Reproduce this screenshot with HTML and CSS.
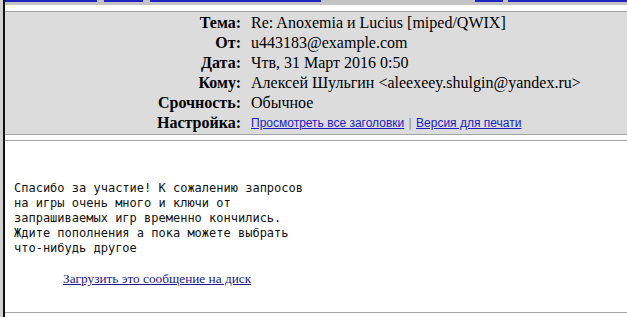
FILE: index.html
```html
<!DOCTYPE html>
<html lang="ru">
<head>
    <meta charset="UTF-8">
    <title>Re: Anoxemia и Lucius [miped/QWIX]</title>
    <link rel="stylesheet" href="styles.css">
</head>
<body>
    <div class="page">
        <div class="frame">
            <div class="toolbar">
                <span class="tab tab-inbox"></span>
                <span class="tab tab-prev"></span>
                <span class="tab tab-list"></span>
                <span class="tab-space"></span>
                <span class="tab tab-next"></span>
                <span class="tab tab-last"></span>
            </div>

            <div class="headers">
                <div class="label">Тема:</div>
                <div class="value">Re: Anoxemia и Lucius [miped/QWIX]</div>
                <div class="label">От:</div>
                <div class="value">u443183@example.com</div>
                <div class="label">Дата:</div>
                <div class="value">Чтв, 31 Март 2016 0:50</div>
                <div class="label">Кому:</div>
                <div class="value">Алексей Шульгин &lt;aleexeey.shulgin@yandex.ru&gt;</div>
                <div class="label">Срочность:</div>
                <div class="value">Обычное</div>
                <div class="label">Настройка:</div>
                <div class="value options">
                    <a href="#">Просмотреть все заголовки</a>
                    <span class="sep">|</span>
                    <a href="#">Версия для печати</a>
                </div>
            </div>

            <div class="message">
<pre class="text">Спасибо за участие! К сожалению запросов
на игры очень много и ключи от
запрашиваемых игр временно кончились.
Ждите пополнения а пока можете выбрать
что-нибудь другое</pre>
                <a href="#" class="download">Загрузить это сообщение на диск</a>
            </div>
        </div>
    </div>
</body>
</html>
```

FILE: styles.css
```css
body {
    margin: 0;
    padding: 0;
    background-color: #fff;
    font-family: 'Liberation Serif', 'Times New Roman', serif;
    font-size: 16px;
    color: #000;
}

.page {
    border-left: 3px solid #d2d2d2;
    min-height: 317px;
}

.frame {
    border-left: 2px solid #111;
    min-height: 317px;
}

.toolbar {
    display: flex;
    height: 5px;
    background-color: #c4c4c4;
    margin-bottom: 6px;
}

.tab {
    height: 2px;
    background-color: #2323c4;
}

.tab-inbox { width: 92px; margin-right: 7px; }
.tab-prev { width: 39px; margin-right: 7px; }
.tab-list { width: 171px; }
.tab-space { width: 154px; }
.tab-next { width: 28px; margin-right: 5px; }
.tab-last { flex: 1; }

.headers {
    display: grid;
    grid-template-columns: 236px 1fr;
    grid-auto-rows: 20px;
    column-gap: 10px;
    background-color: #dcdcdc;
    border-top: 1px solid #a4a4a4;
    border-bottom: 1px solid #a4a4a4;
    padding: 1px 0;
    margin-bottom: 5px;
}

.label,
.value {
    line-height: 20px;
    white-space: nowrap;
}

.label {
    text-align: right;
    font-weight: bold;
}

.options {
    font-family: 'Liberation Sans', Tahoma, sans-serif;
    font-size: 12px;
}

.options a {
    color: #1b1bc8;
}

.sep {
    color: #8a8a8a;
    margin: 0 1px;
}

.message {
    border-top: 1px solid #a4a4a4;
    border-bottom: 1px solid #a4a4a4;
    height: 171px;
}

.text {
    font-family: 'DejaVu Sans Mono', 'Liberation Mono', monospace;
    font-size: 12px;
    line-height: 15px;
    color: #111;
    margin: 0;
    padding: 40px 0 0 9px;
}

.download {
    display: inline-block;
    margin: 15px 0 0 58px;
    font-size: 13.3px;
    line-height: 16px;
    color: #1a1a8a;
}
```
